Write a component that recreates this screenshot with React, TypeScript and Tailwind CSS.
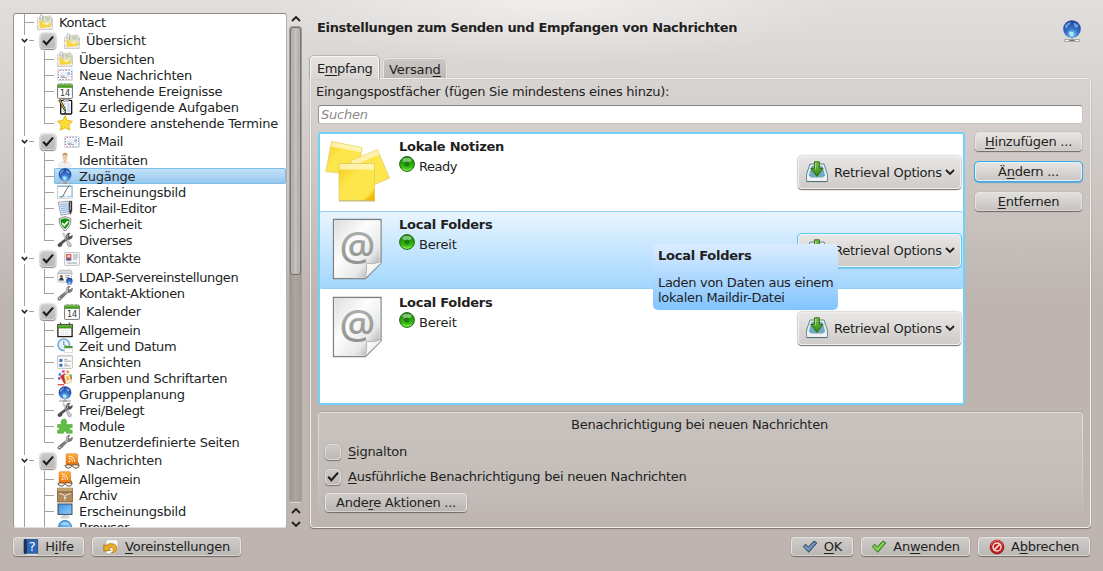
import React from 'react';

type IconName =
  | 'kontact' | 'mail' | 'calendar' | 'todo' | 'star' | 'person' | 'globe' | 'curve' | 'editor'
  | 'shield' | 'tools' | 'contact' | 'ldap' | 'wrench' | 'monthcal' | 'clock' | 'views' | 'colors'
  | 'puzzle' | 'feed' | 'archive' | 'monitor' | 'browser';

const Defs = () => (
  <svg className="absolute h-0 w-0" aria-hidden="true">
    <defs>
      <radialGradient id="gGlobe" cx="0.5" cy="0.8" r="0.8">
        <stop offset="0" stopColor="#8fdcf8" />
        <stop offset="0.4" stopColor="#3676cc" />
        <stop offset="1" stopColor="#1c3a94" />
      </radialGradient>
      <linearGradient id="gPaper" x1="0" y1="0" x2="1" y2="1">
        <stop offset="0" stopColor="#dcdcdc" />
        <stop offset="0.4" stopColor="#fdfdfd" />
        <stop offset="0.7" stopColor="#e8e8e8" />
        <stop offset="1" stopColor="#8a8a8a" />
      </linearGradient>
      <linearGradient id="gCurl" x1="0" y1="0" x2="1" y2="1">
        <stop offset="0" stopColor="#ffffff" />
        <stop offset="0.5" stopColor="#f2f2f2" />
        <stop offset="1" stopColor="#9a9a9a" />
      </linearGradient>
      <linearGradient id="gAt" x1="0" y1="0" x2="0" y2="1">
        <stop offset="0" stopColor="#b4b8b3" />
        <stop offset="1" stopColor="#8a8d89" />
      </linearGradient>
      <linearGradient id="gNote" x1="0" y1="0" x2="1" y2="1">
        <stop offset="0" stopColor="#f5cd1c" />
        <stop offset="0.4" stopColor="#fde64c" />
        <stop offset="0.8" stopColor="#fde64c" />
        <stop offset="1" stopColor="#edb200" />
      </linearGradient>
      <linearGradient id="gFeed" x1="0" y1="0" x2="0" y2="1">
        <stop offset="0" stopColor="#ffb347" />
        <stop offset="1" stopColor="#e86c00" />
      </linearGradient>
      <linearGradient id="gScreen" x1="0" y1="0" x2="1" y2="1">
        <stop offset="0" stopColor="#3d8fe0" />
        <stop offset="1" stopColor="#8ed0ff" />
      </linearGradient>
      <linearGradient id="gGreen" x1="0" y1="0" x2="0" y2="1">
        <stop offset="0" stopColor="#7cc04a" />
        <stop offset="1" stopColor="#2f8a12" />
      </linearGradient>
      <linearGradient id="gLed" x1="0" y1="0" x2="0" y2="1">
        <stop offset="0" stopColor="#1c7a10" />
        <stop offset="0.5" stopColor="#2aa80c" />
        <stop offset="1" stopColor="#55d422" />
      </linearGradient>
    </defs>
  </svg>
);

const Globe = () => (
  <>
    <circle cx="8" cy="6.6" r="6.4" fill="url(#gGlobe)" />
    <path d="M3 4Q4.6 1.6 7.2 1.4L6.6 3 5 4.2 4.4 5.6 3 6ZM9.4 1.8l2.6 1.4.8 1.6-1.8.8-1.6-1.4Z" fill="#a4cdf3" opacity=".6" />
    <path d="M5.6 8.4l3 .4.8 1.4-1.4 2.2-1.8-1.6Z" fill="#c4f0ff" opacity=".75" />
    <path d="M7.5 13h1v1.2h-1z" fill="#999" />
    <path d="M2.6 14.2h10.8v1.4H2.6z" fill="#f4f4f4" stroke="#8b8b8b" strokeWidth=".5" />
    <path d="M6 14.9h4" stroke="#777" strokeWidth=".8" />
  </>
);

const Wrench = () => (
  <>
    <path d="M1.2 14.8Q0 13.5 1.8 12L9.4 6Q8.8 3.4 10.6 1.8 12 .8 13 1.4L11.4 3.2 12 4.8 13.8 4.8 15.2 3Q16 4.8 14.4 6.6 12.8 8 10.8 7.6L4 14.4Q2.4 16 1.2 14.8Z" fill="#7c7c7c" stroke="#4d4d4d" strokeWidth=".5" />
    <path d="M10.5 2.6Q9.5 4.4 10.3 6.2L8 8" stroke="#e6e6e6" strokeWidth="1" fill="none" />
    <circle cx="2.6" cy="13.4" r=".8" fill="#e8e8e8" />
  </>
);

const Tools = () => (
  <>
    <path d="M5.5 1.5l1.4-.6L10 7.6l-1.2.8Z" fill="#d5d5d5" stroke="#999" strokeWidth=".4" />
    <path d="M9 8l1.6-.6 4 5.4-.8 2-2.6-.4Z" fill="#c9c9cf" stroke="#888" strokeWidth=".5" />
    <path d="M1.2 14.2Q0 13 1.8 11.6L9.2 6Q8.6 3.4 10.6 1.6 12 .6 13 1.2L11.6 3 12.2 4.6 14 4.6 15.2 3Q16 4.8 14.4 6.4 12.8 7.8 10.8 7.2L5.4 11.8 4.6 14Q2.4 15.4 1.2 14.2Z" fill="#4f4f4f" stroke="#3a3a3a" strokeWidth=".4" />
    <path d="M10.6 2.8Q9.8 4.4 10.6 6L8 8" stroke="#c8c8c8" strokeWidth=".9" fill="none" />
  </>
);

const Mail = () => (
  <>
    <rect x=".5" y="2.5" width="15" height="11" rx=".6" fill="#fff" stroke="#ccd0d9" strokeWidth=".8" />
    <path d="M2.5 3.5h11M2.5 12.5h11" stroke="#e0504a" strokeWidth="1" strokeDasharray="1.2 4.8" />
    <path d="M5.5 3.5h8M5.5 12.5h8" stroke="#5a92de" strokeWidth="1" strokeDasharray="1.2 4.8" />
    <path d="M1.5 4.4v8M14.5 6.4v6" stroke="#e0504a" strokeWidth="1" strokeDasharray="1.2 4.2" />
    <path d="M1.5 7.2v5M14.5 4v8" stroke="#5a92de" strokeWidth="1" strokeDasharray="1.2 4.2" />
    <rect x="2.8" y="5" width="10.4" height="6.2" fill="#eef1f6" />
    <path d="M10.4 5h2.6v3.2h-2.6z" fill="#9dc2ee" />
    <path d="M3.6 9.2h4M3.6 10.6h6.4" stroke="#8b94a0" strokeWidth=".8" />
  </>
);

const Calendar = () => (
  <>
    <rect x=".6" y="1.2" width="14.8" height="14.2" rx=".7" fill="#fff" stroke="#666" strokeWidth=".9" />
    <path d="M.8 1.2h14.4v3.6H.8z" fill="url(#gGreen)" />
    <path d="M3 .5h2M7 .5h2M11 .5h2" stroke="#9cb88a" strokeWidth="1" />
    <text x="8" y="13" textAnchor="middle" fontSize="8" fontFamily="DejaVu Sans" letterSpacing="0" fill="#333">14</text>
  </>
);

const Feed = () => (
  <>
    <rect x="2" y=".7" width="11.6" height="11.3" rx="1.2" fill="url(#gFeed)" stroke="#d06a0a" strokeWidth=".5" />
    <circle cx="5.5" cy="8.3" r=".9" fill="#fff" />
    <path d="M5 5.5a3.2 3.2 0 013.4 3.3M5 3.2a5.5 5.5 0 015.6 5.6" stroke="#fff2d8" strokeWidth="1" fill="none" />
    <path d="M.9 12.4Q4 11.2 7.6 12.3 10.4 11 15 12.2V13Q14.4 15.3 12 15.2 9.4 15.2 8.8 13.3L7.2 13.3Q6.6 15.3 4.2 15.2 1.4 15.1.9 12.4Z" fill="#f3efe8" stroke="#5f4630" strokeWidth=".9" />
    <path d="M14 9.4l1 3" stroke="#5f4630" strokeWidth=".9" />
  </>
);

const Kontact = () => (
  <>
    <rect x=".6" y="4" width="14.8" height="11.4" fill="#f3f0ea" stroke="#ccc6c0" strokeWidth=".6" />
    <path d="M5.6 2.8l8-1 1.8 9-8.6 1Z" fill="#dfe3cf" stroke="#b9bba8" strokeWidth=".6" />
    <path d="M8 4.4l4.6-.6M8.4 6.2l4.4-.6" stroke="#a9bfa0" strokeWidth=".9" />
    <path d="M2.2 6.6l3-.4.6 3 7.4-.9.6 4.6-11 1Z" fill="#f6d43a" />
    <path d="M5.6 9.4l7.4-1-2.6 3.2Z" fill="#fdf3bc" />
    <path d="M3 6V2.4Q3.2.6 4.6.7 6 .9 5.8 2.6L5.4 7" fill="none" stroke="#a9acae" strokeWidth="1" />
    <path d="M1 15.2h14" stroke="#dd968f" strokeWidth=".8" strokeDasharray="1.2 4" />
    <path d="M3.4 15.2h12M15.3 6v8M.8 7v8" stroke="#8db4e0" strokeWidth=".8" strokeDasharray="1.2 4" />
  </>
);

const icons: Record<IconName, React.ReactNode> = {
  kontact: <Kontact />,
  mail: <Mail />,
  calendar: <Calendar />,
  todo: (
    <>
      <rect x="3.7" y="1.4" width="11" height="13.6" rx=".8" fill="#fff" stroke="#111" strokeWidth="1.3" />
      <rect x="6.3" y=".3" width="5.6" height="2" fill="#c9ccd0" stroke="#555" strokeWidth=".4" />
      <path d="M6 5h3M6 7.5h3M6 10h3M6 12.4h3" stroke="#9fb3c6" strokeWidth=".9" />
      <rect x="10" y="4" width="3.4" height="9.4" fill="#cfe0f4" />
      <path d="M1.8 1.4l1.6-.8 5 9.6.2 2.2-1.6-1.4Z" fill="#e8c52c" stroke="#222" strokeWidth=".8" />
      <path d="M6.6 14.6l2.4-1.4" stroke="#222" strokeWidth="1" />
    </>
  ),
  star: <path d="M8 .8l2.4 4.7 5.2.7-3.8 3.8.9 5.2L8 12.8l-4.7 2.4.9-5.2L.4 6.2l5.2-.7Z" fill="#fbdc35" stroke="#e0a911" strokeWidth=".8" strokeLinejoin="round" />,
  person: (
    <>
      <path d="M1.6 14.6Q1.6 10.6 6 9.8h4q4.4.8 4.4 4.8-6 1.4-12.8 0Z" fill="#f0f1f6" stroke="#d8d9e3" strokeWidth=".6" />
      <path d="M6.6 7.6h2.8v2.6L8 11.8l-1.4-1.6Z" fill="#e9c3a0" />
      <ellipse cx="8" cy="5" rx="2.4" ry="3.6" fill="#edc9a8" />
      <path d="M5.6 4.2Q5 .9 8 .8q3 .1 2.4 3.4Q9.6 2.8 8 2.8T5.6 4.2Z" fill="#c09468" />
    </>
  ),
  globe: <Globe />,
  curve: (
    <>
      <rect x=".6" y="2" width="14.8" height="12.2" fill="#fdfdfd" stroke="#bdbdbd" strokeWidth=".7" />
      <path d="M.6 2.2h14.8" stroke="#5ea8cf" strokeWidth="1" />
      <path d="M1.5 12.6h7M10 12.4h5" stroke="#9fd4ef" strokeWidth="1.1" />
      <path d="M3.6 13.6Q6.4 12.6 7.4 9.4T12.6 1.4" fill="none" stroke="#696969" strokeWidth="1" />
      <path d="M14.8 3v10" stroke="#78bfe2" strokeWidth=".8" />
    </>
  ),
  editor: (
    <>
      <path d="M1.2 2.2l9.8-1 1.4 12.6-8.4 1.4Z" fill="#dfe8f5" stroke="#8d949f" strokeWidth=".8" />
      <path d="M3 4.6l7-.8M3.4 6.6l7-.8M3.8 8.6l7-.8M4.2 10.6l7-.8M4.6 12.6l7-.8" stroke="#88ade0" strokeWidth=".9" />
      <path d="M12 1h3v9.6l-1.4 4-1.4-3.4Z" fill="#2c2c2c" stroke="#555" strokeWidth=".4" />
      <path d="M13.4 1.4v9" stroke="#c2c2c2" strokeWidth=".8" />
    </>
  ),
  shield: (
    <>
      <path d="M8 .6l5.8 1.9q.8 7.2-5.8 12.5Q1.4 9.7 2.2 2.5Z" fill="#f0f0f0" stroke="#6d6d6d" strokeWidth=".8" />
      <path d="M8 2.3l4.5 1.3q.3 5.4-4.5 9.4-4.8-4-4.5-9.4Z" fill="#14900d" />
      <path d="M5.2 7l2.2 2.4 3.6-4.2" fill="none" stroke="#fff" strokeWidth="1.7" />
    </>
  ),
  tools: <Tools />,
  contact: (
    <>
      <rect x=".6" y="1.6" width="14.8" height="12.8" rx=".9" fill="#f8f8f8" stroke="#aaa" strokeWidth=".7" />
      <rect x="2" y="3" width="5.4" height="6.4" fill="#d8635c" />
      <circle cx="4.7" cy="5.2" r="1.4" fill="#f2d3bb" />
      <path d="M2.2 9.4q.2-2.4 2.5-2.4t2.5 2.4Z" fill="#3a66ad" />
      <path d="M9 4h5M9 6h5M9 8h4M3 12h10" stroke="#929aa6" strokeWidth=".9" />
    </>
  ),
  ldap: (
    <>
      <path d="M2.6 1.2h11.2l1.6 3.6H.6Z" fill="#d4dce4" stroke="#9aa2ab" strokeWidth=".6" />
      <rect x=".8" y="4.4" width="13.8" height="8.6" rx=".6" fill="#f8f8f8" stroke="#a0a0a0" strokeWidth=".6" />
      <circle cx="4.4" cy="7.4" r="1.4" fill="#8a5a3c" />
      <path d="M2 11.6q.4-3 2.4-3t2.4 3Z" fill="#303a48" />
      <path d="M8.4 6.6H13M8.4 8.4H12" stroke="#8d98a6" strokeWidth=".9" />
      <circle cx="12.4" cy="12" r="3.2" fill="url(#gGlobe)" />
      <path d="M10 15.6h4.8" stroke="#888" strokeWidth=".6" />
    </>
  ),
  wrench: <Wrench />,
  monthcal: (
    <>
      <rect x=".9" y="2.6" width="14.2" height="12" fill="#fff" stroke="#1c1c1c" strokeWidth="1.3" />
      <path d="M1 2.6h14v3.8H1z" fill="url(#gGreen)" />
      <path d="M3.6.4v3M12.4.4v3" stroke="#555" strokeWidth="1.4" />
      <path d="M4 8.6h9M4 10.6h9M4 12.4h9" stroke="#c2c2c2" strokeWidth=".9" strokeDasharray="1 1.2" />
    </>
  ),
  clock: (
    <>
      <circle cx="6.8" cy="6.8" r="5.8" fill="#e6f1fb" stroke="#6ea6dc" strokeWidth="1.5" />
      <path d="M6.8 3v4l3.2 1.4" stroke="#7b8898" strokeWidth="1" fill="none" />
      <path d="M7.4 8h8.2v2.4H7.4z" fill="#3f9d22" />
      <path d="M7.4 10.2h8.2v4.4H7.4z" fill="#fff" stroke="#b8b8b8" strokeWidth=".5" />
    </>
  ),
  views: (
    <>
      <rect x=".6" y="1.4" width="14.8" height="13" rx=".6" fill="#fbfbfb" stroke="#b5b5b5" strokeWidth=".8" />
      <path d="M1 2.2h14" stroke="#cfcfcf" strokeWidth="1.2" />
      <path d="M2.4 5h3v3h-3zM2.4 9.8h3v3h-3z" fill="#3674b4" />
      <path d="M7.2 5.4h3M7.2 7.2h7M7.2 10h3M7.2 11.8h6" stroke="#9a9a9a" strokeWidth=".9" />
    </>
  ),
  colors: (
    <>
      <circle cx="8" cy="7" r="5.8" fill="none" stroke="#e14a3a" strokeWidth="2.4" strokeDasharray="2.8 33.6" />
      <circle cx="8" cy="7" r="5.8" fill="none" stroke="#8a56c8" strokeWidth="2.4" strokeDasharray="2.8 33.6" strokeDashoffset="-15" />
      <circle cx="8" cy="7" r="5.8" fill="none" stroke="#58b84c" strokeWidth="2.4" strokeDasharray="2.8 33.6" strokeDashoffset="-33" />
      <circle cx="8" cy="7" r="5.8" fill="none" stroke="#4a90dd" strokeWidth="2.4" strokeDasharray="2.8 33.6" strokeDashoffset="-19" />
      <circle cx="8" cy="7" r="5.8" fill="none" stroke="#d54ab2" strokeWidth="2.4" strokeDasharray="2.8 33.6" strokeDashoffset="-23.5" />
      <circle cx="8" cy="7" r="5.8" fill="none" stroke="#f08a33" strokeWidth="2.4" strokeDasharray="2.8 33.6" strokeDashoffset="-28" />
      <path d="M3.2 6l4.6-2.8 4.8 8.4-5.4 2.4Z" fill="#c92f2a" />
      <path d="M7 5.2l5-1.4 2.6 8.2-5.6 2Z" fill="#fbf0d4" stroke="#c9a860" strokeWidth=".5" />
      <path d="M9 6.6l2.4-.6 1.2 4-2.4.8Z" fill="#f0b636" />
      <path d="M.6 14.8h6.6" stroke="#d8352c" strokeWidth="1.2" />
    </>
  ),
  puzzle: (
    <path d="M.6 6.6h4.2Q3.8 5 4 3.6 4.8.8 7.4 1q2.4.4 2.2 3L9 6.4h6.2v3.2q-2.2-.6-2.6 1.2.4 2 2.6 1.4v3H9.6q.2-2-1.6-2.2-1.8.2-1.6 2.2H.6V12q1.8.4 2.2-1.2Q2.6 9 .6 9.6Z" fill="#62bd48" stroke="#4ba436" strokeWidth=".6" />
  ),
  feed: <Feed />,
  archive: (
    <>
      <rect x=".6" y="1.2" width="14.8" height="13.8" fill="#b08a58" stroke="#7f5f36" strokeWidth=".8" />
      <path d="M.6 1.2h14.8v3.4H.6z" fill="#c7a573" />
      <path d="M.6 5h14.8" stroke="#6d5230" strokeWidth=".8" />
      <path d="M2 6.4l4.6 1.4L8 9.6l1.4-1.8L14 6.4M8 8v5.4" stroke="#eee9df" strokeWidth="1" fill="none" />
      <circle cx="8" cy="10.6" r="1.6" fill="#ece6da" stroke="#8b7a5f" strokeWidth=".5" />
    </>
  ),
  monitor: (
    <>
      <rect x="1" y="1" width="14" height="10.4" fill="url(#gScreen)" stroke="#3f4853" strokeWidth="1" />
      <path d="M6.4 11.8h3.2v1.4H6.4z" fill="#b9b9b9" />
      <ellipse cx="8" cy="14" rx="4.4" ry="1.2" fill="#e2e2e2" stroke="#b0b0b0" strokeWidth=".5" />
    </>
  ),
  browser: (
    <>
      <circle cx="8" cy="8" r="6.6" fill="url(#gScreen)" stroke="#2b78c4" strokeWidth=".8" />
      <path d="M3 5q4-4 10 0-5 2.6-10 0Z" fill="#c3e6ff" opacity=".7" />
    </>
  ),
};

const Icon = ({ name }: { name: IconName }) => (
  <svg viewBox="0 0 16 16" className="h-4 w-4 shrink-0">{icons[name]}</svg>
);

/** Renders a label whose `&`-prefixed letter is the keyboard accelerator. */
const Accel = ({ text }: { text: string }) => {
  const at = text.indexOf('&');
  if (at < 0) return <span>{text}</span>;
  return (
    <span>
      {text.slice(0, at)}
      <span className="underline decoration-1 underline-offset-2 [text-decoration-skip-ink:none]">{text[at + 1]}</span>
      {text.slice(at + 2)}
    </span>
  );
};

const Check = ({ on, outlined }: { on?: boolean; outlined?: boolean }) => (
  <span
    className={`flex h-4 w-4 shrink-0 items-center justify-center rounded-[4px] border bg-linear-to-b from-[#cbc8c6] to-[#bcb9b6] ${
      outlined ? 'border-[#dddbd9] shadow-[0_1px_1px_#77706c,0_0_1px_#8b8480]' : 'border-[#d6d4d2] shadow-[0_1px_1px_#8d8784,0_0_2px_#a5a09d]'
    }`}
  >
    {on && (
      <svg viewBox="0 0 14 14" className="h-3.5 w-3.5 shrink-0">
        <path d="M2.2 6.8L5.4 10.2 12 2.6" fill="none" stroke="#1b1b1b" strokeWidth="2.1" />
      </svg>
    )}
  </span>
);

const Chevron = ({ dir = 'down', className = '' }: { dir?: 'down' | 'up'; className?: string }) => (
  <svg viewBox="0 0 10 8" className={`h-2 w-2.5 shrink-0 ${className}`}>
    <path d={dir === 'down' ? 'M1 2L5 6 9 2' : 'M1 6L5 2 9 6'} fill="none" stroke="#1f1f1f" strokeWidth="1.8" />
  </svg>
);

/** `tight` marks labels whose glyphs sit closer together. */
type Child = { label: string; icon: IconName; selected?: boolean; tight?: boolean };
type Group = { label: string; icon: IconName; children: Child[]; tight?: boolean };

const groups: Group[] = [
  {
    label: 'Übersicht', icon: 'kontact', children: [
      { label: 'Übersichten', icon: 'kontact' },
      { label: 'Neue Nachrichten', icon: 'mail' },
      { label: 'Anstehende Ereignisse', icon: 'calendar' },
      { label: 'Zu erledigende Aufgaben', icon: 'todo' },
      { label: 'Besondere anstehende Termine', icon: 'star' },
    ],
  },
  {
    label: 'E-Mail', icon: 'mail', tight: true, children: [
      { label: 'Identitäten', icon: 'person' },
      { label: 'Zugänge', icon: 'globe', selected: true },
      { label: 'Erscheinungsbild', icon: 'curve' },
      { label: 'E-Mail-Editor', icon: 'editor', tight: true },
      { label: 'Sicherheit', icon: 'shield' },
      { label: 'Diverses', icon: 'tools', tight: true },
    ],
  },
  {
    label: 'Kontakte', icon: 'contact', tight: true, children: [
      { label: 'LDAP-Servereinstellungen', icon: 'ldap', tight: true },
      { label: 'Kontakt-Aktionen', icon: 'wrench', tight: true },
    ],
  },
  {
    label: 'Kalender', icon: 'calendar', tight: true, children: [
      { label: 'Allgemein', icon: 'monthcal', tight: true },
      { label: 'Zeit und Datum', icon: 'clock', tight: true },
      { label: 'Ansichten', icon: 'views' },
      { label: 'Farben und Schriftarten', icon: 'colors' },
      { label: 'Gruppenplanung', icon: 'globe' },
      { label: 'Frei/Belegt', icon: 'tools', tight: true },
      { label: 'Module', icon: 'puzzle' },
      { label: 'Benutzerdefinierte Seiten', icon: 'wrench' },
    ],
  },
  {
    label: 'Nachrichten', icon: 'feed', children: [
      { label: 'Allgemein', icon: 'feed', tight: true },
      { label: 'Archiv', icon: 'archive', tight: true },
      { label: 'Erscheinungsbild', icon: 'monitor' },
      { label: 'Browser', icon: 'browser', tight: true },
    ],
  },
];

const tracking = (tight?: boolean) => (tight ? 'tracking-[-0.38px]' : 'tracking-[-0.24px]');

const ChildRow = ({ item, last }: { item: Child; last: boolean }) => (
  <div className="flex h-4">
    <svg viewBox="0 0 43 16" className="h-4 w-[43px] shrink-0" shapeRendering="crispEdges">
      <path d={`M10.5 0V16M30.5 0V${last ? 9 : 16}M30 8.5H40`} stroke="#a3a09e" fill="none" />
    </svg>
    <div
      className={`-ml-[3px] flex grow items-center gap-1.5 pl-[3px] ${
        item.selected ? 'rounded-[2px] bg-linear-to-b from-[#c6e3f8] to-[#93c6ec] shadow-[inset_0_0_0_1px_#7cbdec]' : ''
      }`}
    >
      <Icon name={item.icon} />
      <span className={`pt-0.5 ${tracking(item.tight)}`}>{item.label}</span>
    </div>
  </div>
);

const GroupRows = ({ group, open }: { group: Group; open: boolean }) => (
  <>
    <div className="flex h-[21px] items-center">
      <svg viewBox="0 0 25 21" className="h-[21px] w-[25px] shrink-0">
        <path d="M10.5 0V5M10.5 16V21M15 10.5H20" stroke="#a3a09e" fill="none" />
        <path d="M7.8 9L10.5 11.8 13.2 9" fill="none" stroke="#1f1f1f" strokeWidth="1.5" />
      </svg>
      <span className="ml-px"><Check on /></span>
      <span className="ml-2 mr-[5px] flex"><Icon name={group.icon} /></span>
      <span className={`ml-px ${tracking(group.tight)}`}>{group.label}</span>
    </div>
    {group.children.map((c, i) => (
      <ChildRow key={c.label} item={c} last={!open && i === group.children.length - 1} />
    ))}
  </>
);

const Tree = () => (
  <div className="flex h-[515px] w-[274px] flex-col overflow-hidden rounded-[3px] border border-t-[#8f8a87] border-r-[#b5afac] border-b-[#e0dcda] border-l-[#9a9491] bg-white whitespace-nowrap">
    <div className="flex h-4 shrink-0">
      <svg viewBox="0 0 23 16" className="h-4 w-[23px] shrink-0" shapeRendering="crispEdges">
        <path d="M10.5 0V16M10 8.5H20" stroke="#a3a09e" fill="none" />
      </svg>
      <Icon name="kontact" />
      <span className={`ml-1.5 mt-px ${tracking(true)}`}>Kontact</span>
    </div>
    {groups.map((g, i) => <GroupRows key={g.label} group={g} open={i === groups.length - 1} />)}
  </div>
);

const ScrollBar = () => (
  <div className="flex h-[515px] w-[13px] flex-col items-center">
    <Chevron dir="up" className="mt-0.5" />
    <div className="mt-[3px] flex h-[477px] w-[13px] flex-col rounded-[4px] border border-[#a39c98] border-b-[#dedad8] bg-linear-to-r from-[#9d9794] via-[#aca6a3] to-[#a19b98]">
      <div className="h-[248px] rounded-[3px] border border-[#76706d] bg-linear-to-r from-[#a7a3a0] via-[#c6c3c0] to-[#aba7a4] shadow-[inset_0_0_0_1px_#bbb7b4]" />
    </div>
    <Chevron dir="up" className="mt-1" />
    <Chevron className="mt-[5px]" />
  </div>
);

const PushButton = ({ label, icon, focus, className = '' }: { label: string; icon?: React.ReactNode; focus?: boolean; className?: string }) => (
  <button
    className={`flex h-[19px] items-center justify-center rounded-[4px] border bg-linear-to-b whitespace-nowrap ${icon ? 'gap-1.5 pt-px' : ''} ${
      focus ? 'border-[#e4f3fb] shadow-[0_0_0_1px_#3fa9e4,0_1px_1px_1px_#5da7d0]' : 'border-[#e6e4e2] border-b-[#d6d3d0] shadow-[0_1px_1px_#6f6965,0_0_1px_#8f8884]'
    } ${className}`}
  >
    {icon}
    <Accel text={label} />
  </button>
);

const TabBar = () => (
  <div className="flex h-[21px] items-end">
    <div className="relative z-10 -mb-px flex h-[23px] w-[69px] items-center rounded-t-[4px] border border-b-0 border-[#f6f5f4] bg-linear-to-b from-[#e6e4e2] to-[#d9d5d3] pl-1.5 pt-px shadow-[0_-1px_0_#bab5b2,-1px_0_0_#aaa4a1,1px_0_0_#aaa4a1] tracking-[-0.4px] [clip-path:inset(-2px_-2px_0_-2px)]">
      <Accel text="E&mpfang" />
    </div>
    <div className="ml-1 flex h-5 w-16 items-center rounded-t-[4px] border border-b-0 border-[#e8e6e4] bg-linear-to-b from-[#cbc7c4] to-[#bdb8b5] pl-[5px] pt-0.5 shadow-[0_0_1px_#8c8582] tracking-[-0.1px]">
      <Accel text="Versan&d" />
    </div>
  </div>
);

const NotesIcon = () => (
  <svg viewBox="0 0 66 64" className="h-16 w-[66px]">
    <g stroke="#d9c46a" strokeWidth=".6">
      <path d="M6.5 1.5L37 7.5 33 35 .8 31.6Z" fill="url(#gNote)" />
      <path d="M25.5 21L52.5 9.5 64.5 38 38 50Z" fill="url(#gNote)" />
      <path d="M14 23.5H49.5V60.5H14Z" fill="url(#gNote)" />
    </g>
    <path d="M7 2l29.5 5.8-.8 4.4L5.9 6.6ZM26 21l26.3-11 2 4.6-20 8.6H27ZM14.5 24H49v5.5H14.5Z" fill="#fff6c8" opacity=".8" />
    <path d="M39 60.5Q47 57 49.5 49V60.5Z" fill="#f3ba00" opacity=".8" />
    <path d="M14 61h36" stroke="#a99a55" strokeWidth=".7" />
  </svg>
);

const AtFileIcon = () => (
  <svg viewBox="0 0 52 64" className="h-16 w-[52px]">
    <path d="M2.5 2.5H50V46L34.5 61.5H2.5Z" fill="url(#gPaper)" stroke="#7d8082" strokeWidth="1.3" />
    <path d="M3.5 3.6H49M3.6 3.6V60.6H34L49 45.4V3.6" fill="none" stroke="#fff" strokeOpacity=".7" strokeWidth=".8" />
    <path d="M34 61.5Q36.5 53 35.5 46.5 43 47.8 50 44.5V46Z" fill="url(#gCurl)" stroke="#9b9b9b" strokeWidth=".6" />
    <text x="26.5" y="43.5" textAnchor="middle" fontSize="40" fontFamily="Open Sans, Noto Sans" fontWeight="600" letterSpacing="0" fill="url(#gAt)">@</text>
  </svg>
);

const Led = () => (
  <svg viewBox="0 0 16 16" className="mt-px h-4 w-4">
    <circle cx="8" cy="8" r="7.4" fill="url(#gLed)" stroke="#176a10" strokeWidth="1" />
    <ellipse cx="8" cy="4" rx="4.6" ry="2.3" fill="#c9eec0" opacity=".55" />
    <circle cx="8" cy="8" r="2.6" fill="#156f12" opacity=".75" />
    <path d="M3.4 12.4q4.6 3.6 9.2 0" stroke="#8cf05a" strokeWidth="1" fill="none" />
  </svg>
);

const InboxIcon = () => (
  <svg viewBox="0 0 22 22" className="h-[22px] w-[22px]">
    <path d="M4 3H18L21.4 13V20.5H.6V13Z" fill="#e4eff2" stroke="#5f8795" strokeWidth="1" />
    <path d="M5.6 5H16.4L19.2 14.6 16 17.4H6L2.8 14.6Z" fill="#6faac0" />
    <path d="M1.2 13.6L5 16.4H17L20.8 13.6V20H1.2Z" fill="#f0f0f0" />
    <path d="M.8 20.6H21.2" stroke="#4f6f7a" strokeWidth="1" />
    <path d="M8.4.8H13.4V7.4H17L11 15.4 4.8 7.4H8.4Z" fill="url(#gGreen)" stroke="#33640f" strokeWidth=".9" />
    <path d="M9.6 2V8.4" stroke="#b4da8c" strokeWidth="1" />
  </svg>
);

const RetrievalButton = ({ focus }: { focus?: boolean }) => (
  <button
    className={`mr-0.5 flex h-[33px] w-[163px] items-center rounded-[4px] border bg-linear-to-b from-[#e9e7e6] to-[#cecbc8] pl-[7px] ${
      focus ? 'border-[#e5f6fd] shadow-[0_0_0_1px_#63c8f3,0_1px_1px_1px_#7fc4e4]' : 'border-[#f0efee] shadow-[0_1px_1px_#77716e,0_0_2px_#8b8582]'
    }`}
  >
    <InboxIcon />
    <span className="ml-1.5 pt-0.5 whitespace-nowrap">Retrieval Options</span>
    <Chevron className="ml-[3px]" />
  </button>
);

type Account = { name: string; status: string; kind: 'notes' | 'file'; selected?: boolean };

const accounts: Account[] = [
  { name: 'Lokale Notizen', status: 'Ready', kind: 'notes' },
  { name: 'Local Folders', status: 'Bereit', kind: 'file', selected: true },
  { name: 'Local Folders', status: 'Bereit', kind: 'file' },
];

const AccountRow = ({ account }: { account: Account }) => (
  <div
    className={`flex h-[78px] items-center ${
      account.selected ? 'rounded-[2px] bg-linear-to-b from-[#e9f5ff] to-[#a1d6fd] shadow-[inset_0_1px_0_#8fd2f6,inset_0_-1px_0_#8fd2f6]' : ''
    }`}
  >
    <div className="flex w-[79px] justify-center pr-3">
      {account.kind === 'notes' ? <span className="-mr-1 ml-1"><NotesIcon /></span> : <span className="-mr-1.5 pb-0.5"><AtFileIcon /></span>}
    </div>
    <div className="flex grow flex-col self-start pt-1.5">
      <div className="h-4 font-bold leading-4">{account.name}</div>
      <div className="flex gap-1">
        <Led />
        <span className={`mt-1 leading-4 ${account.kind === 'notes' ? 'tracking-[-0.45px]' : 'tracking-[-0.15px]'}`}>{account.status}</span>
      </div>
    </div>
    <RetrievalButton focus={account.selected} />
  </div>
);

const ToolTip = () => (
  <div className="absolute left-[653px] top-[244px] z-20 h-[66px] w-[185px] rounded-[5px] bg-linear-to-b from-[#dbecff] to-[#80c4ff] px-[5px] pt-1 leading-[15px]">
    <div className="font-bold">Local Folders</div>
    <div className="mt-3 whitespace-nowrap tracking-[-0.3px]">Laden von Daten aus einem<br />lokalen Maildir-Datei</div>
  </div>
);

const HelpIcon = () => (
  <svg viewBox="0 0 16 16" className="h-4 w-4">
    <path d="M1 .6H14.6V14.6H3Q1 15 1 13.4Z" fill="#2c68b8" stroke="#173a70" strokeWidth=".7" />
    <path d="M1 .6H3.8V14.4H2Q1 14.2 1 13.4Z" fill="#1b2f4e" />
    <path d="M3 15.3H14.6" stroke="#eee" strokeWidth="1" />
    <text x="9.2" y="12.2" textAnchor="middle" fontSize="13" fontFamily="DejaVu Sans" letterSpacing="0" fill="#fff">?</text>
  </svg>
);

const UndoIcon = () => (
  <svg viewBox="0 0 16 16" className="h-4 w-4">
    <path d="M3 .6H15V11L11.6 14.8H3Z" fill="#f7f7f7" stroke="#a9a9a9" strokeWidth=".6" />
    <path d="M.8 5.6L2.8 7Q6 3.4 10.4 5 15 7 13.4 11.4 12 14 8.4 14 11.2 12.2 10.4 9.8 9 7.4 5.6 9L7.4 11.4.8 12Z" fill="#eeb022" stroke="#a86c08" strokeWidth=".8" />
  </svg>
);

const CheckIcon = ({ fill, edge }: { fill: string; edge: string }) => (
  <svg viewBox="0 0 16 16" className="h-4 w-4">
    <path d="M1.2 7.6L3.6 5.2 6.4 8 12 2 14.8 4 6.8 13.2Z" fill={fill} stroke={edge} strokeWidth="1" strokeLinejoin="round" />
    <path d="M2.8 7.2l3.6 3.2L12.6 3.6" fill="none" stroke="#fff" opacity=".3" strokeWidth="1" />
  </svg>
);

const CancelIcon = () => (
  <svg viewBox="0 0 16 16" className="h-4 w-4">
    <circle cx="8" cy="8" r="6.9" fill="#c3201c" stroke="#86100d" strokeWidth=".8" />
    <circle cx="8" cy="8" r="4" fill="none" stroke="#f1d9d7" strokeWidth="1.5" />
    <path d="M4.8 11.2L11.2 4.8" stroke="#f1d9d7" strokeWidth="1.7" />
    <path d="M2 6Q4 1.4 8 1.4T14 6" stroke="#e88" strokeWidth=".7" fill="none" />
  </svg>
);

const low = 'from-[#cfccca] to-[#bbb7b4]';

export default function App() {
  return (
    <div className="relative flex h-[571px] w-[1103px] flex-col overflow-hidden bg-[radial-gradient(300px_64px_at_50%_0,rgba(255,255,255,0.5),transparent),linear-gradient(to_bottom,#e0dedc_0px,#d0cbc8_150px,#beb5b1_300px)] font-['DejaVu_Sans',sans-serif] text-[13px] leading-4 tracking-[-0.25px] text-[#221f1e]">
      <Defs />
      <div className="flex pl-[13px] pt-[13px]">
        <Tree />
        <div className="ml-0.5"><ScrollBar /></div>
        <main className="ml-2 flex w-[781px] flex-col">
          <header className="flex h-11 justify-between pl-[7px] pr-2">
            <h1 className="mt-[7px] font-bold tracking-[-0.34px]">Einstellungen zum Senden und Empfangen von Nachrichten</h1>
            <svg viewBox="0 0 16 16" className="mt-[7px] h-[22px] w-[22px]"><Globe /></svg>
          </header>
          <TabBar />
          <section className="h-[450px] rounded-[4px] rounded-tl-none border border-[#f3f1f0] pl-[7px] pr-[7px] pt-[5px] shadow-[0_1px_1px_#7d7673,0_0_1px_#8d8683,inset_0_0_1px_#9c9592]">
            <div className="-ml-[2px]">Eingangspostfächer (fügen Sie mindestens eines hinzu):</div>
            <div className="mt-[5px] flex h-[19px] items-center rounded-[3px] border border-[#c9c4c1] border-t-[#88827f] border-l-[#98928f] bg-white pl-0.5 italic text-[#8c8a89]">Suchen</div>
            <div className="mt-2 flex">
              <div className="h-[273px] w-[647px] rounded-[3px] border-2 border-[#73d0f8] bg-white">
                <div className="-mt-px">
                  {accounts.map((a, i) => <AccountRow key={i} account={a} />)}
                </div>
              </div>
              <div className="ml-[10px] flex w-[107px] flex-col gap-[11px]">
                <PushButton label="&Hinzufügen ..." className="from-[#e8e6e4] to-[#cdc9c6]" />
                <PushButton label="Ä&ndern ..." focus className="from-[#e6e4e2] to-[#cac6c3]" />
                <PushButton label="&Entfernen" className="from-[#e2e0de] to-[#c6c2bf]" />
              </div>
            </div>
            <div className="mt-[7px] flex h-[108px] flex-col rounded-t-[4px] border-t border-[#e0dddb] bg-[linear-gradient(to_bottom,#e0dddb,transparent),linear-gradient(to_bottom,#e0dddb,transparent),linear-gradient(to_bottom,#c8c2bf,#c4beba_60%,transparent)] bg-[size:1px_100%,1px_100%,100%_100%] bg-[position:left_top,right_top,left_top] bg-no-repeat pl-[7px] shadow-[0_-1px_0_#aba4a0]">
              <div className="mt-1 -ml-[9px] text-center">Benachrichtigung bei neuen Nachrichten</div>
              <div className="mt-[11px] flex items-center gap-[7px]"><Check outlined /><Accel text="&Signalton" /></div>
              <div className="mt-[9px] flex items-center gap-[7px]"><Check on outlined /><Accel text="&Ausführliche Benachrichtigung bei neuen Nachrichten" /></div>
              <PushButton label="Ande&re Aktionen ..." className={`mt-2 w-[142px] shrink-0 ${low}`} />
            </div>
          </section>
        </main>
      </div>
      <footer className="mt-[9px] flex px-[13px]">
        <PushButton label="H&ilfe" icon={<HelpIcon />} className={`w-[71px] ${low}`} />
        <PushButton label="&Voreinstellungen" icon={<UndoIcon />} className={`ml-2 w-[149px] ${low}`} />
        <div className="grow" />
        <PushButton label="&OK" icon={<CheckIcon fill="#5f83ad" edge="#2f4668" />} className={`w-[62px] ${low}`} />
        <PushButton label="An&wenden" icon={<CheckIcon fill="#6cc93c" edge="#33701a" />} className={`ml-2 w-[109px] ${low}`} />
        <PushButton label="A&bbrechen" icon={<CancelIcon />} className={`ml-2 w-[112px] ${low}`} />
      </footer>
      <ToolTip />
    </div>
  );
}
